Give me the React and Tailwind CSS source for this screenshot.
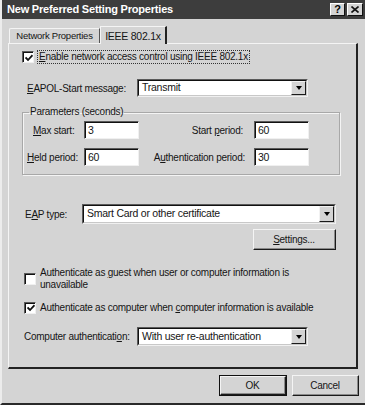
const FONT = { fontFamily: '"Liberation Sans", Arial, sans-serif' };

function U({ children }) {
  return <span className="underline underline-offset-[1px]">{children}</span>;
}

function Arrow() {
  return (
    <div className="w-[15px] flex items-center justify-center bg-[#d4d4d4] border-t border-l border-t-[#f2f2f2] border-l-[#f2f2f2] border-r border-b border-r-[#1a1a1a] border-b-[#1a1a1a]">
      <div className="w-0 h-0 border-l-[3px] border-r-[3px] border-t-[4px] border-l-transparent border-r-transparent border-t-black" />
    </div>
  );
}

function Combo({ text, className }) {
  return (
    <div className={`flex bg-white border-t border-l border-t-[#5a5a5a] border-l-[#5a5a5a] border-r border-b border-r-[#f0f0f0] border-b-[#f0f0f0] ${className}`}>
      <div className="flex flex-1 border-t border-l border-t-[#111] border-l-[#111] border-r border-b border-r-[#c8c8c8] border-b-[#c8c8c8]">
        <div className="flex-1 flex items-center pl-[3px] whitespace-nowrap text-[10.5px]">{text}</div>
        <Arrow />
      </div>
    </div>
  );
}

function Field({ value }) {
  return (
    <div className="w-[55px] h-[18px] bg-white border-t border-l border-t-[#5a5a5a] border-l-[#5a5a5a] border-r border-b border-r-[#f0f0f0] border-b-[#f0f0f0]">
      <div className="h-full flex items-center pl-[2px] border-t border-l border-t-[#111] border-l-[#111] text-[10.5px]">{value}</div>
    </div>
  );
}

function Check({ checked }) {
  return (
    <div className="w-[12px] h-[12px] shrink-0 bg-white border-t border-l border-t-[#5a5a5a] border-l-[#5a5a5a] border-r border-b border-r-[#f0f0f0] border-b-[#f0f0f0]">
      <div className="w-full h-full border-t border-l border-t-[#111] border-l-[#111] flex items-center justify-center">
        {checked && (
          <svg width="8" height="8" viewBox="0 0 8 8">
            <path d="M0.5 3.5 L3 6 L7.5 1.2" stroke="#111" strokeWidth="1.8" fill="none" />
          </svg>
        )}
      </div>
    </div>
  );
}

function Button({ children, def, className }) {
  return (
    <div className={`${def ? 'border border-[#111]' : ''} ${className}`}>
      <div className="h-full flex items-center justify-center bg-[#d4d4d4] border-t border-l border-t-[#f4f4f4] border-l-[#f4f4f4] border-r border-b border-r-[#1a1a1a] border-b-[#1a1a1a]">
        <div className="flex-1 h-full flex items-center justify-center border-r border-b border-r-[#8a8a8a] border-b-[#8a8a8a]">
          {children}
        </div>
      </div>
    </div>
  );
}

export default function App() {
  return (
    <div
      style={FONT}
      className="w-[365px] h-[405px] bg-[#d4d4d4] text-[10px] tracking-[-0.25px] text-[#151515] flex flex-col border-l-2 border-l-[#ececec] border-b-2 border-b-[#2a2a2a] overflow-hidden whitespace-nowrap"
    >
      {/* title bar */}
      <div className="h-[19px] bg-[#3d3d3d] flex items-center pl-[5px] pr-[2px]">
        <span className="flex-1 text-white font-bold text-[11px] tracking-[-0.2px]">New Preferred Setting Properties</span>
        <div className="flex gap-[2px]">
          <div className="w-[15px] h-[13px] bg-[#d4d4d4] border-t border-l border-t-white border-l-white border-r border-b border-r-[#111] border-b-[#111] flex items-center justify-center font-bold text-[11px] text-black leading-none">?</div>
          <div className="w-[16px] h-[13px] bg-[#d4d4d4] border-t border-l border-t-white border-l-white border-r border-b border-r-[#111] border-b-[#111] flex items-center justify-center text-black">
            <svg width="8" height="7" viewBox="0 0 8 7">
              <path d="M0.5 0.5 L7.5 6.5 M7.5 0.5 L0.5 6.5" stroke="#111" strokeWidth="1.6" />
            </svg>
          </div>
        </div>
      </div>

      {/* tabs */}
      <div className="flex items-end pl-[7px] mt-[7px] h-[17px]">
        <div className="w-[91px] h-[15px] flex items-center justify-center border-t border-l border-t-[#f4f4f4] border-l-[#f4f4f4] border-r border-r-[#555] rounded-tl-[2px] text-[9.5px]">
          Network Properties
        </div>
        <div className="w-[67px] h-[18px] -mb-[1px] flex items-start justify-center pt-[2px] bg-[#d4d4d4] border-t border-l border-t-[#f4f4f4] border-l-[#f4f4f4] border-r-2 border-r-[#222] relative z-10 text-[10.5px]">
          IEEE 802.1x
        </div>
      </div>

      {/* panel */}
      <div className="ml-[6px] w-[350px] h-[326px] border-t border-l border-t-[#f4f4f4] border-l-[#f4f4f4] border-r-2 border-b-2 border-r-[#222] border-b-[#222] flex flex-col px-[12px]">
        <div className="flex items-center mt-[6px] h-[14px] pl-[1px]">
          <Check checked />
          <span className="ml-[3px] px-[1px] border border-dotted border-[#333] leading-[12px]">
            <U>E</U>nable network access control using IEEE 802.1x
          </span>
        </div>

        <div className="flex items-center mt-[15px]">
          <span className="w-[116px] pl-[6px]"><U>E</U>APOL-Start message:</span>
          <Combo text="Transmit" className="w-[171px] h-[18px]" />
        </div>

        <fieldset className="mt-[9px] ml-[1px] w-[318px] h-[69px] border border-[#a8a8a8] shadow-[1px_1px_0_#f4f4f4,inset_1px_1px_0_#f4f4f4] px-0">
          <legend className="ml-[6px] px-[1px] leading-[12px]">Parameters (seconds)</legend>
          <div className="grid grid-cols-[61px_55px_115px_55px] items-center mt-[3px] gap-y-[9px]">
            <span className="pl-[10px]"><U>M</U>ax start:</span>
            <Field value="3" />
            <span className="text-right pr-[11px]">Start <U>p</U>eriod:</span>
            <Field value="60" />
            <span className="pl-[4px]"><U>H</U>eld period:</span>
            <Field value="60" />
            <span className="text-right pr-[9px]">A<U>u</U>thentication period:</span>
            <Field value="30" />
          </div>
        </fieldset>

        <div className="flex items-center mt-[29px]">
          <span className="w-[61px] pl-[4px]">E<U>A</U>P type:</span>
          <Combo text="Smart Card or other certificate" className="w-[254px] h-[20px]" />
        </div>

        <div className="flex justify-end mt-[5px] pr-[8px]">
          <Button className="w-[83px] h-[21px]"><U>S</U>ettings...</Button>
        </div>

        <div className="flex items-start mt-[17px] pl-[3px]">
          <div className="mt-[6px]"><Check /></div>
          <span className="ml-[4px] leading-[12px] whitespace-normal w-[290px]">
            Authenticate as <U>g</U>uest when user or computer information is<br />unavailable
          </span>
        </div>

        <div className="flex items-center mt-[9px] pl-[3px]">
          <Check checked />
          <span className="ml-[4px]">
            Authenticate as computer when <U>c</U>omputer information is available
          </span>
        </div>

        <div className="flex items-center mt-[12px]">
          <span className="w-[116px] pl-[3px]">Computer authenticati<U>o</U>n:</span>
          <Combo text="With user re-authentication" className="w-[171px] h-[19px]" />
        </div>
      </div>

      {/* buttons */}
      <div className="flex justify-end gap-[5px] mt-[6px] pr-[6px]">
        <Button def className="w-[68px] h-[21px]">OK</Button>
        <Button className="w-[67px] h-[21px]">Cancel</Button>
      </div>
    </div>
  );
}
